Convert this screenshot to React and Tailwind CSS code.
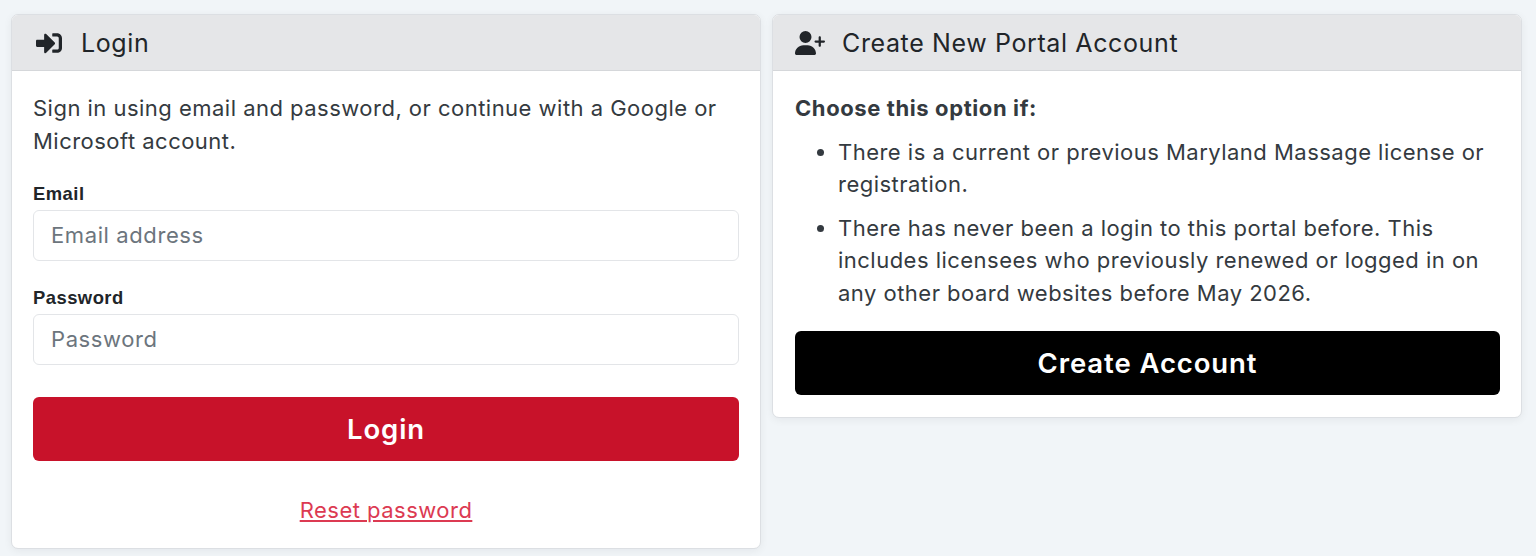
import { FaSignInAlt } from 'react-icons/fa'
import { FaUserPlus } from 'react-icons/fa6'

const sans = "font-['Inter','Noto_Sans',sans-serif]"

function Card({ icon, title, children }) {
  return (
    <div className="bg-white rounded-[7px] border border-[#dcdfe3] shadow-[0_2px_8px_rgba(15,23,42,0.06)] overflow-hidden">
      <div className="h-[56px] bg-[#e5e6e8] border-b border-[#d5d7da] flex items-center px-[22px] gap-[17px] text-[#212529]">
        <span className="w-[30px] flex justify-center">{icon}</span>
        <span className="text-[25px] tracking-[0.62px] pt-[2px]">{title}</span>
      </div>
      <div className="px-[21px] pt-[21px] pb-[21px]">{children}</div>
    </div>
  )
}

function Field({ label, placeholder, type }) {
  return (
    <div>
      <label className="block font-['Liberation_Sans',Arial,sans-serif] font-bold text-[18.4px] leading-[24px] text-[#212529] mb-[4px]">{label}</label>
      <input
        type={type}
        placeholder={placeholder}
        className="w-full h-[51px] px-[17px] pb-[2px] rounded-[6px] border border-[#e3e5e8] bg-white text-[22px] tracking-[0.6px] placeholder:text-[#6c757d] outline-none"
      />
    </div>
  )
}

export default function App() {
  return (
    <div className={`${sans} min-h-[556px] bg-[#f1f5f8] pl-[11px] pr-[14px] pt-[14px] grid grid-cols-2 gap-[11px] items-start text-[22px] leading-[32.5px] tracking-[0.48px] text-[#343a40]`}>
      <Card icon={<FaSignInAlt size={26} />} title="Login">
        <p>Sign in using email and password, or continue with a Google or Microsoft account.</p>
        <form className="mt-[25px] flex flex-col gap-[25px]">
          <Field label="Email" placeholder="Email address" type="email" />
          <Field label="Password" placeholder="Password" type="password" />
        </form>
        <button type="button" className="mt-[32px] w-full h-[64px] rounded-[6px] bg-[#c8122a] text-white text-[27.5px] font-semibold tracking-[0.9px]">
          Login
        </button>
        <div className="mt-[33px] text-center">
          <a href="#" className="text-[#dc3a52] underline">Reset password</a>
        </div>
      </Card>

      <Card icon={<FaUserPlus size={30} />} title="Create New Portal Account">
        <div className="pl-px pb-px">
          <p className="font-bold tracking-[0.6px]">Choose this option if:</p>
          <ul className="list-disc pl-[43px] mt-[11px] space-y-[11px]">
            <li>There is a current or previous Maryland Massage license or registration.</li>
            <li>There has never been a login to this portal before. This includes licensees who previously renewed or logged in on any other board websites before May 2026.</li>
          </ul>
          <button type="button" className="mt-[22px] w-full h-[64px] rounded-[6px] bg-black text-white text-[27.5px] font-semibold tracking-[0.9px]">
            Create Account
          </button>
        </div>
      </Card>
    </div>
  )
}
